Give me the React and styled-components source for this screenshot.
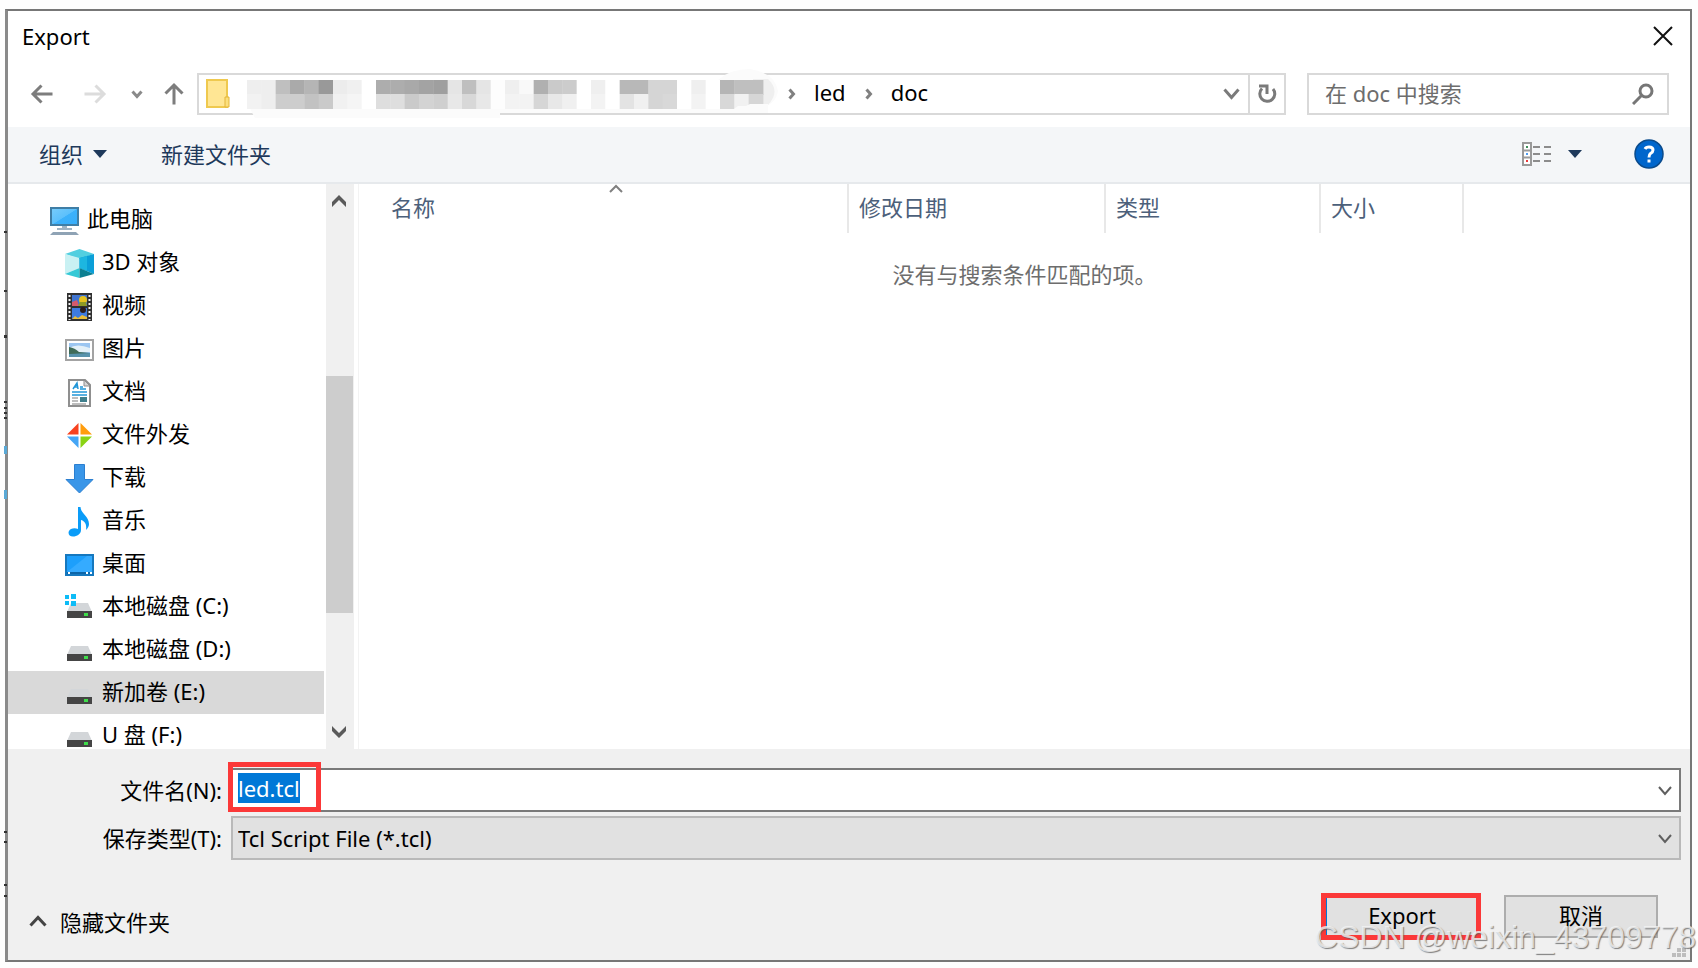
import React, { useEffect, useRef } from "react";
import styled, { createGlobalStyle } from "styled-components";

const FONT = `"Noto Sans", "Noto Sans CJK SC", sans-serif`;

const GlobalStyle = createGlobalStyle`
  *, *::before, *::after { box-sizing: border-box; }
  body { margin: 0; background: #fefefe; font-family: ${FONT}; font-size: 22px; line-height: 30px; color: #000; }
  button, input, select { font: inherit; color: inherit; margin: 0; }
  a { color: inherit; text-decoration: none; }
  svg { display: block; flex: none; }
`;

const Page = styled.div`
  position: relative;
  height: 100vh;
  min-height: 640px;
  padding: 9px 6px 6px 5px;
`;

const Dialog = styled.main`
  height: 100%;
  display: flex;
  flex-direction: column;
  background: #fff;
  border: 2px solid #777;
  border-left-width: 3px;
  border-left-color: #8a8a8a;
`;

const TitleBar = styled.header`
  display: flex;
  align-items: center;
  justify-content: space-between;
  height: 50px;
  padding: 0 15px 0 14px;
`;

const Title = styled.h1`
  margin: 0;
  font-size: 22px;
  font-weight: 400;
`;

const IconButton = styled.button`
  display: flex;
  align-items: center;
  justify-content: center;
  width: ${(p) => p.$w || 24}px;
  height: ${(p) => p.$h || 24}px;
  margin-left: ${(p) => p.$before || 0}px;
  padding: 0;
  border: 0;
  background: transparent;
`;

const NavRow = styled.div`
  display: flex;
  align-items: center;
  height: 66px;
  padding: 0 21px 1px 22px;
`;

const NavButtons = styled.div`
  display: flex;
  align-items: center;
  margin-right: 11px;
`;

const AddressBar = styled.div`
  flex: 1;
  display: flex;
  align-items: center;
  height: 42px;
  padding-left: 7px;
  border: 2px solid #d9d9d9;
`;

const Crumbs = styled.nav`
  flex: 1;
  display: flex;
  align-items: center;
  gap: 18px;
  min-width: 0;
`;

const Crumb = styled.a`
  line-height: 28px;
  padding-bottom: 4px;
`;

const RefreshCell = styled.div`
  display: flex;
  align-items: center;
  justify-content: center;
  width: 36px;
  height: 100%;
  border-left: 2px solid #d9d9d9;
`;

const SearchBox = styled.label`
  display: flex;
  align-items: center;
  width: 362px;
  height: 42px;
  margin-left: 21px;
  padding: 0 13px 0 16px;
  border: 2px solid #d9d9d9;
`;

const SearchInput = styled.input`
  flex: 1;
  min-width: 0;
  padding: 0 0 2px;
  border: 0;
  outline: 0;
  background: transparent;
  &::placeholder { color: #6d6d6d; opacity: 1; }
`;

const Toolbar = styled.div`
  display: flex;
  align-items: center;
  height: 57px;
  padding: 0 26px 2px 31px;
  background: #f4f6f8;
  border-bottom: 2px solid #e6e9ec;
  color: #1e395b;
`;

const ToolButton = styled.button`
  display: flex;
  align-items: center;
  gap: ${(p) => p.$gap || 10}px;
  padding: 0;
  border: 0;
  background: transparent;
  margin-right: ${(p) => p.$after || 0}px;
`;

const Spacer = styled.div`
  flex: 1;
`;

const Body = styled.div`
  flex: 1;
  min-height: 0;
  display: flex;
`;

const Tree = styled.ul`
  width: 316px;
  margin: 0;
  padding: 14px 0 0;
  list-style: none;
  overflow: hidden;
`;

const TreeLink = styled.a`
  display: flex;
  align-items: center;
  gap: 8px;
  height: 43px;
  padding-left: ${(p) => (p.$root ? 42 : 57)}px;
  background: ${(p) => (p.$selected ? "#d9d9d9" : "transparent")};
  white-space: nowrap;
`;

const TreeLabel = styled.span`
  padding-bottom: 3px;
`;

const TreeArt = styled.svg`
  margin-top: 2px;
`;

const ScrollBar = styled.div`
  display: flex;
  flex-direction: column;
  align-items: center;
  width: 28px;
  margin-left: 2px;
  background: #f0f0f0;
`;

const ScrollButton = styled(IconButton)`
  width: 100%;
  height: 34px;
  padding-right: 2px;
`;

const Track = styled.div`
  flex: 1;
  display: flex;
  flex-direction: column;
  width: 100%;
`;

const Gap = styled.div`
  flex: ${(p) => p.$share};
`;

const Thumb = styled.div`
  flex: 236;
  width: 27px;
  background: #cdcdcd;
`;

const Files = styled.section`
  flex: 1;
  min-width: 0;
  margin-left: 4px;
  border-left: 1px solid #f3f3f3;
`;

const FileTable = styled.table`
  width: 100%;
  table-layout: fixed;
  border-collapse: collapse;
`;

const ColumnHead = styled.th`
  position: relative;
  width: ${(p) => (p.$w ? p.$w + "px" : "auto")};
  height: 49px;
  padding: 0 0 3px ${(p) => p.$pad || 10}px;
  border-right: ${(p) => (p.$w ? "2px solid #e8e8e8" : "0")};
  color: #4c607a;
  font-weight: 400;
  text-align: left;
`;

const SortMark = styled.span`
  position: absolute;
  top: 0;
  left: 51%;
`;

const EmptyCell = styled.td`
  padding: 26px 0 0;
  color: #6d6d6d;
  text-align: center;
`;

const Footer = styled.form`
  padding: 19px 9px 0 20px;
  height: 211px;
  background: #f0f0f0;
`;

const Field = styled.div`
  display: flex;
  align-items: center;
  margin-bottom: 4px;
`;

const FieldLabel = styled.label`
  width: 194px;
  margin-right: 9px;
  text-align: right;
  white-space: nowrap;
`;

const Combo = styled.div`
  position: relative;
  flex: 1;
  display: flex;
  align-items: center;
  height: 44px;
  padding-right: 6px;
  background: ${(p) => (p.$muted ? "#e1e1e1" : "#fff")};
  border: 2px solid ${(p) => (p.$muted ? "#b9b9b9" : "#7a7a7a")};
`;

const NameInput = styled.input`
  flex: 1;
  min-width: 0;
  height: 36px;
  padding: 0 0 4px 5px;
  border: 0;
  outline: 0;
  background: transparent;
  caret-color: transparent;
  &::selection { background: #0078d7; color: #fff; }
`;

const TypeSelect = styled.select`
  appearance: none;
  flex: 1;
  height: 40px;
  margin-right: -22px;
  padding: 0 22px 0 5px;
  border: 0;
  outline: 0;
  background: transparent;
`;

const ComboArrow = styled.span`
  display: flex;
  width: 16px;
  pointer-events: none;
`;

const Highlight = styled.span`
  position: absolute;
  left: -5px;
  top: -8px;
  width: 93px;
  height: 50px;
  border: 5px solid #fb3838;
  pointer-events: none;
`;

const Actions = styled.div`
  display: flex;
  align-items: center;
  gap: 25px;
  padding: 31px 23px 0 0;
`;

const HideFolders = styled(ToolButton)`
  margin-top: 10px;
`;

const PushButton = styled.button`
  width: 154px;
  height: 43px;
  padding: 0 0 3px;
  background: #e1e1e1;
  border: 2px solid ${(p) => (p.$primary ? "#0078d7" : "#adadad")};
`;

const Marked = styled.span`
  position: relative;
  display: flex;
`;

const ButtonHighlight = styled.span`
  position: absolute;
  inset: -2px -2px -2px -4px;
  border: 5px solid #fb3838;
  pointer-events: none;
`;

const Watermark = styled.div`
  position: absolute;
  right: 2px;
  bottom: 11px;
  font: 32px/40px "Liberation Sans", sans-serif;
  color: rgba(246, 246, 246, 0.8);
  text-shadow: 1px 1px 1px rgba(90, 90, 90, 0.75);
  white-space: nowrap;
  pointer-events: none;
`;

const Grip = styled.div`
  position: absolute;
  right: 12px;
  bottom: 11px;
`;

const EdgeMarks = styled.div`
  position: absolute;
  left: 4px;
  top: 0;
`;

function Chevron({ dir = "down", w = 16, h = 10, stroke = 2, color = "#5f5f5f" }) {
  const m = stroke / 2 + 1;
  const pts = {
    down: `${m},${m} ${w / 2},${h - m} ${w - m},${m}`,
    up: `${m},${h - m} ${w / 2},${m} ${w - m},${h - m}`,
    right: `${m},${m} ${w - m},${h / 2} ${m},${h - m}`,
  }[dir];
  return (
    <svg width={w} height={h} aria-hidden="true">
      <polyline points={pts} fill="none" stroke={color} strokeWidth={stroke} />
    </svg>
  );
}

function ScrollArrow({ up }) {
  return (
    <svg width="14" height="12" viewBox="0 0 14 12" aria-hidden="true">
      <path
        d="M0 7L7 0L14 7V12L7 5L0 12Z"
        fill="#5a5a5a"
        transform={up ? undefined : "rotate(180 7 6)"}
      />
    </svg>
  );
}

function Triangle() {
  return (
    <svg width="14" height="8" aria-hidden="true">
      <path d="M0 0H14L7 8Z" fill="#1e395b" />
    </svg>
  );
}

function Arrow({ dir, color }) {
  const turn = { left: 0, up: 90, right: 180 }[dir];
  return (
    <svg width="24" height="24" viewBox="0 0 24 24" aria-hidden="true">
      <g transform={`rotate(${turn} 12 12)`} fill="none" stroke={color} strokeWidth="3">
        <path d="M3 12H22.500M11.500 3.500L3 12L11.500 20.500" />
      </g>
    </svg>
  );
}

const TOP = "ee ee bf aa b5 99 ec f0 ff ad ad a9 a3 9f e5 bf e5 fd ef f9 b0 ca cc ff ef ff b8 b8 d5 d5 ff ef ff b5 bf bf".split(" ");
const LOW = "f2 ee cd cd c2 ca f1 f5 ff de de ca d3 cf e8 d8 e8 fd f3 f3 d6 e8 f0 ff f3 ff e3 f0 d5 d8 ff f3 ff d8 f1 d6".split(" ");

const MosaicArt = styled.svg`
  margin: -4px 0 -4px 8px;
  overflow: visible;
`;

function Mosaic() {
  const cell = 43 / 3;
  const shade = (v) => `#${v}${v}${v}`;
  return (
    <MosaicArt width="531" height="50" role="img" aria-label="…">
      <path d="M12 11H480Q492 0 512 0Q537 4 540 22Q538 36 520 40L508 44H262V49H17Q5 30 12 11Z" fill="#fbfbfb" />
      <path d="M515 10H530Q543 22 530 36H515Z" fill="#efefef" />
      {TOP.map((v, i) => (
        <rect key={i} x={9 + i * cell} y="11" width={cell + 0.4} height="15" fill={shade(v)} />
      ))}
      {LOW.map((v, i) => (
        <rect key={i} x={9 + i * cell} y="25" width={cell + 0.4} height="15" fill={shade(v)} />
      ))}
      <path d="M496 40L500 37H508L512 35H530V44H496Z" fill="#fbfbfb" />
    </MosaicArt>
  );
}

const ICONS = {
  computer: (
    <>
      <defs>
        <linearGradient id="screen" x1="0" y1="0" x2="1" y2="1">
          <stop offset="0" stopColor="#79cdfb" />
          <stop offset=".5" stopColor="#5cc0fc" />
          <stop offset=".52" stopColor="#3cb1fb" />
          <stop offset="1" stopColor="#37adfa" />
        </linearGradient>
      </defs>
      <rect x="1" y="2" width="27" height="17" fill="url(#screen)" stroke="#3f7ea6" strokeWidth="2" />
      <path d="M12 20H17V22H22V24H7V22H12Z" fill="#9fb3c3" />
      <path d="M3 26H26L29 29H0Z" fill="#8fa3b5" />
    </>
  ),
  cube: (
    <>
      <path d="M14.500 0L29 5L14.500 10L0 5Z" fill="#52cfe0" />
      <path d="M0 5L14.500 9V19L0 25Z" fill="#c9f1f3" />
      <path d="M14.500 9L29 5V25L14.500 19Z" fill="#0b9fd8" />
      <path d="M14.500 9L22 7V22L14.500 19Z" fill="#1db6e0" />
      <path d="M0 25L14.500 19V29Z" fill="#35c9d6" />
      <path d="M14.500 19L29 25L14.500 29Z" fill="#0c7f91" />
    </>
  ),
  video: (
    <>
      <rect x="2" y="1" width="25" height="28" fill="#303030" />
      <rect x="7" y="3" width="15" height="11" fill="#3f74cf" />
      <rect x="7" y="16" width="15" height="11" fill="#3d7be0" />
      <path d="M7 14V10L12 8L14 14Z" fill="#d45a6c" />
      <circle cx="18" cy="8" r="4" fill="#e6c21f" />
      <path d="M13 14L15 10H21L22 14Z" fill="#8f9a26" />
      <circle cx="18" cy="18" r="3" fill="#2b1c1c" />
      <path d="M7 27L10 24L13 26L17 23L22 25V27Z" fill="#e9bd3a" />
      <path d="M4.500 3V28M24.500 3V28" stroke="#f2f2f2" strokeWidth="2" strokeDasharray="2 2" />
    </>
  ),
  picture: (
    <>
      <rect x="1" y="5" width="27" height="20" fill="#fff" stroke="#a3a3a3" strokeWidth="2" />
      <rect x="4" y="8" width="21" height="14" fill="#9cc6f1" />
      <path d="M4 13Q12 8 25 13V17H4Z" fill="#e3f0f8" />
      <path d="M4 12Q10 13 14 17L25 18V19L4 20Z" fill="#3f6b58" />
      <path d="M4 19L25 18V22H4Z" fill="#5893ad" />
    </>
  ),
  document: (
    <>
      <path d="M4 2H20L25 7V28H4Z" fill="#fff" stroke="#8f8f8f" strokeWidth="2" />
      <path d="M19 2V8H25Z" fill="#d5d5d5" stroke="#8f8f8f" />
      <path d="M8 11L12 5L13 11M9 9H13M15 9H18M15 11H21M7 14H22M7 17H22" fill="none" stroke="#2196d8" strokeWidth="1.500" />
      <path d="M7 20H13M7 23H13M7 26H21" stroke="#a9a9a9" strokeWidth="1.500" />
      <rect x="15" y="19" width="7" height="5" fill="#3f7f8c" />
    </>
  ),
  share: (
    <>
      <path d="M13.500 2V13.500H2Z" fill="#f8421f" />
      <path d="M15.500 2L27 13.500H15.500Z" fill="#ff9d0c" />
      <path d="M13.500 27V15.500H2Z" fill="#45a5f5" />
      <path d="M15.500 27L27 15.500H15.500Z" fill="#8ad313" />
    </>
  ),
  download: (
    <path d="M9.500 .5H19.500V15.500H28L14.500 29L1 15.500H9.500Z" fill="#3a96e8" stroke="#2c7fd0" />
  ),
  music: (
    <path d="M13 0H15.500C16 7 24 9 24 17C24 19 23 21 21 23C22 16 19 14 16 13V23C16 27 12 29.500 8 29.500C3 29.500 2 24 6 22C8 21 11 21 13 22Z" fill="#0a9cf8" />
  ),
  desktop: (
    <>
      <rect x="1" y="5" width="27" height="20" fill="#1d9ffb" stroke="#1678be" strokeWidth="2" />
      <path d="M2 22L22 6H27V22Z" fill="#35abff" />
      <path d="M2 23H27" stroke="#0c65a8" strokeWidth="2" />
      <path d="M3 23H5M21 23H23M25 23H27" stroke="#fff" strokeWidth="2" />
    </>
  ),
  drive: (
    <>
      <path d="M6 10H23L27 19H2Z" fill="#d3d6d9" />
      <path d="M2 18H27V25H2Z" fill="#454545" />
      <rect x="19" y="20" width="4" height="3" fill="#3fdd4b" />
    </>
  ),
  system: (
    <>
      <path d="M6 10H23L27 19H2Z" fill="#d3d6d9" />
      <path d="M2 18H27V25H2Z" fill="#454545" />
      <rect x="19" y="20" width="4" height="3" fill="#3fdd4b" />
      <path d="M0 2H4V6H0ZM6 1H11V6H6ZM0 8H4V12H0ZM6 8H11V13H6Z" fill="#0dbcf7" />
    </>
  ),
};

function TreeIcon({ name }) {
  return (
    <TreeArt width="29" height="30" viewBox="0 0 29 30" aria-hidden="true">
      {ICONS[name]}
    </TreeArt>
  );
}

const TREE = [
  { icon: "computer", label: "此电脑", root: true },
  { icon: "cube", label: "3D 对象" },
  { icon: "video", label: "视频" },
  { icon: "picture", label: "图片" },
  { icon: "document", label: "文档" },
  { icon: "share", label: "文件外发" },
  { icon: "download", label: "下载" },
  { icon: "music", label: "音乐" },
  { icon: "desktop", label: "桌面" },
  { icon: "system", label: "本地磁盘 (C:)" },
  { icon: "drive", label: "本地磁盘 (D:)" },
  { icon: "drive", label: "新加卷 (E:)", selected: true },
  { icon: "drive", label: "U 盘 (F:)" },
];

export default function App() {
  const nameRef = useRef(null);
  useEffect(() => {
    nameRef.current.focus();
    nameRef.current.select();
  }, []);

  return (
    <Page>
      <GlobalStyle />
      <Dialog>
        <TitleBar>
          <Title>Export</Title>
          <IconButton aria-label="关闭">
            <svg width="20" height="20" aria-hidden="true">
              <path d="M1 1L19 19M19 1L1 19" stroke="#111" strokeWidth="2" />
            </svg>
          </IconButton>
        </TitleBar>

        <NavRow>
          <NavButtons>
            <IconButton aria-label="后退"><Arrow dir="left" color="#7d7d7d" /></IconButton>
            <IconButton aria-label="前进" $before={29}><Arrow dir="right" color="#dcdcdc" /></IconButton>
            <IconButton aria-label="最近浏览的位置" $w={14} $before={23}>
              <Chevron w={14} h={10} stroke={3} color="#8a8a8a" />
            </IconButton>
            <IconButton aria-label="上移" $before={18}><Arrow dir="up" color="#7d7d7d" /></IconButton>
          </NavButtons>
          <AddressBar>
            <svg width="24" height="30" aria-hidden="true">
              <rect x="1" y="1" width="20" height="27" fill="#ffe694" stroke="#efc94f" strokeWidth="2" />
              <path d="M19 28V18H23V28Z" fill="#fbdf7d" stroke="#e3b53a" strokeWidth="1" />
            </svg>
            <Crumbs aria-label="地址">
              <Mosaic />
              <Chevron dir="right" w={9} h={14} stroke={3} color="#808080" />
              <Crumb href="#led">led</Crumb>
              <Chevron dir="right" w={9} h={14} stroke={3} color="#808080" />
              <Crumb href="#doc">doc</Crumb>
            </Crumbs>
            <IconButton aria-label="以前的位置" $w={34}>
              <Chevron w={19} h={13} stroke={3} color="#7a7a7a" />
            </IconButton>
            <RefreshCell>
              <IconButton aria-label="刷新">
                <svg width="20" height="20" viewBox="0 0 20 20" aria-hidden="true">
                  <path d="M16 5A7.500 7.500 0 1 1 5 4.500" fill="none" stroke="#7a7a7a" strokeWidth="3" />
                  <path d="M2 2H10V10" fill="none" stroke="#7a7a7a" strokeWidth="3" />
                </svg>
              </IconButton>
            </RefreshCell>
          </AddressBar>
          <SearchBox>
            <SearchInput type="text" placeholder="在 doc 中搜索" aria-label="在 doc 中搜索" />
            <svg width="22" height="22" viewBox="0 0 22 22" aria-hidden="true">
              <circle cx="14" cy="8" r="6" fill="none" stroke="#767676" strokeWidth="3" />
              <path d="M10 12L1 21" stroke="#767676" strokeWidth="3" />
            </svg>
          </SearchBox>
        </NavRow>

        <Toolbar>
          <ToolButton $after={54}>组织 <Triangle /></ToolButton>
          <ToolButton>新建文件夹</ToolButton>
          <Spacer />
          <ToolButton $gap={16} $after={52} aria-label="更改视图">
            <svg width="30" height="24" viewBox="0 0 30 24" aria-hidden="true">
              <path d="M1 1H9V23H1ZM1 8.500H9M1 15.500H9" fill="#fff" stroke="#9a9a9a" strokeWidth="2" />
              <path d="M11 5H18M22 5H29M11 12H18M22 12H29M11 19H18M22 19H29" stroke="#8c8c8c" strokeWidth="2" />
              <rect x="4" y="4" width="2" height="2" fill="#3f8f5a" />
              <rect x="4" y="11" width="2" height="2" fill="#4f9cf0" />
              <rect x="4" y="18" width="2" height="2" fill="#e83a3a" />
            </svg>
            <Triangle />
          </ToolButton>
          <IconButton aria-label="获取帮助" $w={30} $h={30}>
            <svg width="30" height="30" viewBox="0 0 30 30" aria-hidden="true">
              <circle cx="15" cy="15" r="14" fill="#0066cc" stroke="#0a4b8c" strokeWidth="1.500" />
              <path d="M11 10Q12 8 15 8Q19 8 19 11Q19 13 16.500 14.500Q15 15.500 15 18.500" fill="none" stroke="#fff" strokeWidth="3" />
              <rect x="13.500" y="20.500" width="3" height="3" fill="#fff" />
            </svg>
          </IconButton>
        </Toolbar>

        <Body>
          <Tree>
            {TREE.map((item) => (
              <li key={item.label}>
                <TreeLink href="#tree" $root={item.root} $selected={item.selected}>
                  <TreeIcon name={item.icon} />
                  <TreeLabel>{item.label}</TreeLabel>
                </TreeLink>
              </li>
            ))}
          </Tree>
          <ScrollBar>
            <ScrollButton aria-label="向上滚动"><ScrollArrow up /></ScrollButton>
            <Track>
              <Gap $share={158} />
              <Thumb />
              <Gap $share={102} />
            </Track>
            <ScrollButton aria-label="向下滚动"><ScrollArrow /></ScrollButton>
          </ScrollBar>
          <Files>
            <FileTable>
              <thead>
                <tr>
                  <ColumnHead $w={489} $pad={32}>
                    名称
                    <SortMark><Chevron dir="up" w={16} h={10} color="#808080" /></SortMark>
                  </ColumnHead>
                  <ColumnHead $w={257}>修改日期</ColumnHead>
                  <ColumnHead $w={215}>类型</ColumnHead>
                  <ColumnHead $w={143}>大小</ColumnHead>
                  <ColumnHead as="td" />
                </tr>
              </thead>
              <tbody>
                <tr>
                  <EmptyCell colSpan={5}>没有与搜索条件匹配的项。</EmptyCell>
                </tr>
              </tbody>
            </FileTable>
          </Files>
        </Body>

        <Footer onSubmit={(e) => e.preventDefault()}>
          <Field>
            <FieldLabel htmlFor="file-name">文件名(N):</FieldLabel>
            <Combo>
              <NameInput id="file-name" ref={nameRef} type="text" defaultValue="led.tcl" />
              <ComboArrow><Chevron w={16} h={11} /></ComboArrow>
              <Highlight />
            </Combo>
          </Field>
          <Field>
            <FieldLabel htmlFor="file-type">保存类型(T):</FieldLabel>
            <Combo $muted>
              <TypeSelect id="file-type">
                <option>Tcl Script File (*.tcl)</option>
              </TypeSelect>
              <ComboArrow><Chevron w={16} h={11} /></ComboArrow>
            </Combo>
          </Field>
          <Actions>
            <HideFolders type="button" $gap={12}>
              <Chevron dir="up" w={20} h={13} stroke={3} color="#444" />
              隐藏文件夹
            </HideFolders>
            <Spacer />
            <Marked>
              <PushButton type="submit" $primary>Export</PushButton>
              <ButtonHighlight />
            </Marked>
            <PushButton type="button">取消</PushButton>
          </Actions>
        </Footer>
      </Dialog>
      <Grip>
        <svg width="14" height="14" fill="#bdbdbd" aria-hidden="true">
          <path d="M10 0H14V4H10ZM5 5H9V9H5ZM10 5H14V9H10ZM0 10H4V14H0ZM5 10H9V14H5ZM10 10H14V14H10Z" />
        </svg>
      </Grip>
      <EdgeMarks>
        <svg width="3" height="905" aria-hidden="true">
          <path d="M0 231H3V233H0ZM0 290H3V292H0ZM0 335H3V338H0ZM0 401H3V403H0ZM0 407H3V409H0ZM0 412H3V414H0ZM0 417H3V419H0ZM0 831H3V833H0ZM0 841H3V843H0ZM0 884H3V886H0ZM0 895H3V897H0Z" fill="#333" />
          <path d="M0 446H3V454H0ZM0 490H3V499H0Z" fill="#5aa9d6" />
        </svg>
      </EdgeMarks>
      <Watermark>CSDN @weixin_43709778</Watermark>
    </Page>
  );
}
